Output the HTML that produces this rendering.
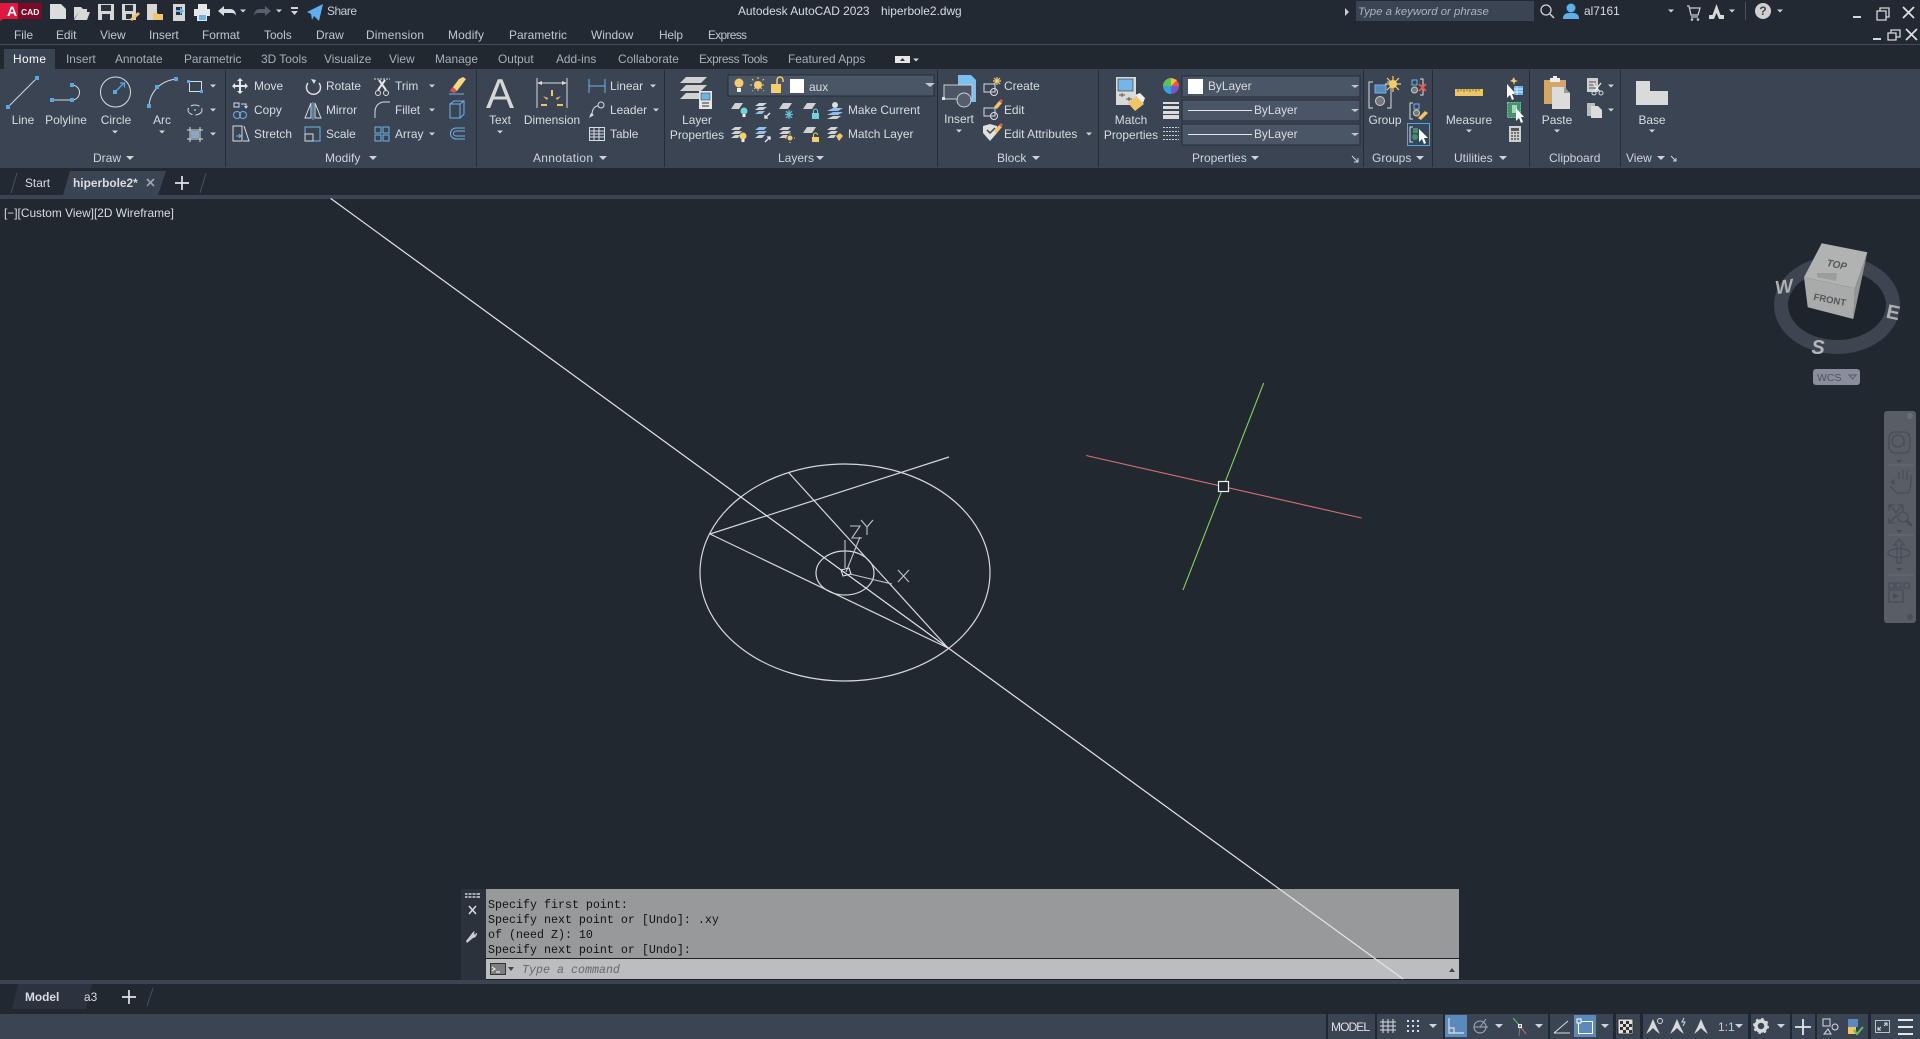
<!DOCTYPE html>
<html><head><meta charset="utf-8"><title>AutoCAD</title>
<style>
html,body{margin:0;padding:0;background:#212830;width:1920px;height:1039px;overflow:hidden}
svg{display:block;position:absolute;left:0;top:0}
text{font-family:"Liberation Sans",sans-serif;font-size:11.9px;fill:#d9dde2}
.m text{fill:#c3c8ce}
.tb text{fill:#aab0b8}
.c text{text-anchor:middle}
.p text{fill:#d0d4da;font-size:12px}
.cmd text{font-family:"Liberation Mono",monospace;font-size:11.67px;fill:#101214}
.s{fill:#5aa6e0}
.w{stroke:#d9dde2;fill:none}
.b{stroke:#6db3e8;fill:none}
.n{stroke:#474d57;fill:none;stroke-width:1.3}
</style></head><body>
<svg width="1920" height="1039" viewBox="0 0 1920 1039">
<defs><path id="c" d="M-3-1.5h6l-3 3z" fill="#d0d4da"/><path id="cb" d="M-4-2h8l-4 4z" fill="#d0d4da"/></defs>
<rect width="1920" height="1039" fill="#212830"/>
<rect y="0" width="1920" height="44" fill="#222933"/>
<rect y="44" width="1920" height="1" fill="#454c58"/>

<!-- logo and QAT -->
<path d="M0 3H18V19H3L0 21z" fill="#e0173f"/><rect x="18" y="3" width="24" height="16" fill="#7d0a2a"/>
<text x="7" y="16" style="font-weight:700;font-size:14px;fill:#fff">A</text>
<text x="21" y="15" style="font-size:8.500px;font-weight:700;fill:#eee">CAD</text>
<path d="M50 4h11l5 5v10H50z" fill="#dcdcdc"/>
<path d="M74 7h7l2 2h4v3H79l-5 7zM79 12h11l-3 8H74z" fill="#d8d8d8"/>
<path d="M98 4h16v16H98z" fill="#d6d6d6"/><rect x="101" y="5" width="10" height="6" fill="#2a303a"/><rect x="102" y="14" width="8" height="6" fill="#2a303a"/>
<path d="M122 4h14v16h-14z" fill="#d6d6d6"/><rect x="125" y="5" width="8" height="6" fill="#2a303a"/><rect x="126" y="14" width="6" height="5" fill="#2a303a"/><path d="M130 19l8-7 2 2-8 7z" fill="#f4c46a"/>
<path d="M147 4h10v16h-10z" fill="#d6d6d6"/><path d="M153 13h4l1 1h5v6h-10z" fill="#f4c46a"/>
<path d="M173 4h12v17h-12z" fill="#d6d6d6"/><path d="M176 7h6v8h-6z" fill="#2a303a"/><path d="M176 10h4v-3l4 4-4 4v-3h-4z" fill="#6db3e8"/>
<path d="M198 4h9v5h-9z" fill="#e6e6e6"/><path d="M194 9h16v7h-3v5h-10v-5h-3z" fill="#e6e6e6"/><rect x="199" y="15" width="7" height="5" fill="#6db3e8"/>
<path d="M218 11l6-5v3h6c4 0 6 3 6 7-1-3-3-3-6-3h-6v3z" fill="#d9dde2"/><use href="#c" x="243" y="11"/>
<path d="M271 11l-6-5v3h-5c-4 0-6 3-6 7 1-3 3-3 6-3h5v3z" fill="#59606b"/><use href="#c" x="279" y="11"/>
<path d="M291 7h7v2h-7zM291 11h7l-3.500 4z" fill="#d0d4da"/>
<path d="M307 12l16-8-4 17-5-5-2 4-1-6z" fill="#5fb0ea"/>
<text x="327" y="15" textLength="30" style="fill:#c7d0da">Share</text>
<text x="738" y="15">Autodesk AutoCAD 2023</text><text x="881" y="15">hiperbole2.dwg</text>
<path d="M1345 8l4 4-4 4z" fill="#c8ccd2"/>
<rect x="1356" y="1" width="178" height="20" fill="#3b4453"/>
<text x="1358" y="15" style="font-style:italic;font-size:11.400px;fill:#aeb4bc">Type a keyword or phrase</text>
<circle cx="1546" cy="10" r="5" fill="none" stroke="#cfd3d8" stroke-width="1.300"/><path d="M1550 14l4 4" stroke="#cfd3d8" stroke-width="1.500"/>
<circle cx="1571" cy="8" r="4.500" fill="#5fb0ea"/><path d="M1563 19c0-6 4-6 8-6s8 0 8 6z" fill="#5fb0ea"/>
<text x="1584" y="15">al7161</text><use href="#c" x="1671" y="11"/>
<path d="M1687 6h2l2 9h7l2-7h-10M1691 17h7" fill="none" stroke="#c8ccd2" stroke-width="1.300"/><circle cx="1692" cy="19.500" r="1.300" fill="#c8ccd2"/><circle cx="1698" cy="19.500" r="1.300" fill="#c8ccd2"/>
<path d="M1716.500 4l4 11h3.500v4h-5l-2.500-6-2.500 6h-5v-4h3.500z" fill="#d8d8d8"/><use href="#c" x="1732" y="11"/>
<rect x="1745" y="2" width="1" height="18" fill="#4a515c"/>
<circle cx="1763" cy="11" r="8" fill="#d0d0d0"/><text x="1763" y="15" text-anchor="middle" style="font-weight:700;fill:#444">?</text><use href="#c" x="1780" y="11"/>
<rect x="1853" y="16" width="8" height="2" fill="#d8d8d8"/>
<path d="M1877 11h9v9h-9zM1880 11v-3h9v9h-3" fill="none" stroke="#d8d8d8" stroke-width="1.300"/>
<path d="M1903 7l11 11m0-11l-11 11" stroke="#e0e0e0" stroke-width="1.700"/>
<rect x="1873" y="38" width="8" height="2" fill="#d8d8d8"/>
<path d="M1888 33h8v7h-8zM1891 33v-3h9v7h-4" fill="none" stroke="#d8d8d8" stroke-width="1.300"/>
<path d="M1906 29l11 11m0-11l-11 11" stroke="#e0e0e0" stroke-width="1.700"/>

<!-- menu -->
<g class="m">
<text x="14" y="39">File</text><text x="56" y="39">Edit</text><text x="100" y="39">View</text><text x="149" y="39">Insert</text><text x="202" y="39">Format</text><text x="264" y="39">Tools</text><text x="316" y="39">Draw</text><text x="366" y="39" textLength="58">Dimension</text><text x="448" y="39" textLength="36">Modify</text><text x="509" y="39" textLength="58">Parametric</text><text x="591" y="39">Window</text><text x="659" y="39" textLength="24">Help</text><text x="708" y="39" textLength="39">Express</text>
</g>

<!-- ribbon tabs -->
<rect x="4" y="49" width="51" height="20" fill="#3b4453"/>
<text x="13" y="63" textLength="33" style="fill:#fff">Home</text>
<g class="tb">
<text x="66" y="63">Insert</text><text x="115" y="63">Annotate</text><text x="184" y="63">Parametric</text><text x="261" y="63">3D Tools</text><text x="324" y="63">Visualize</text><text x="389" y="63">View</text><text x="435" y="63">Manage</text><text x="498" y="63">Output</text><text x="556" y="63">Add-ins</text><text x="618" y="63">Collaborate</text><text x="699" y="63" textLength="69">Express Tools</text><text x="788" y="63">Featured Apps</text>
</g>
<rect x="895" y="56" width="15" height="7" fill="#e6e6e6"/><path d="M900 61h5l-2.500-3z" fill="#333"/><use href="#c" x="916" y="60"/>

<!-- ribbon -->
<rect y="69" width="1920" height="99" fill="#3b4453"/>
<g fill="#252c36">
<rect x="225" y="70" width="1" height="97"/><rect x="476" y="70" width="1" height="97"/><rect x="664" y="70" width="1" height="97"/><rect x="937" y="70" width="1" height="97"/><rect x="1098" y="70" width="1" height="97"/><rect x="1363" y="70" width="1" height="97"/><rect x="1432" y="70" width="1" height="97"/><rect x="1529" y="70" width="1" height="97"/><rect x="1620" y="70" width="1" height="97"/>
</g>

<!-- Labels -->
<g class="c">
<text x="23" y="124">Line</text><text x="66" y="124">Polyline</text><text x="116" y="124">Circle</text><text x="162" y="124">Arc</text>
<text x="500" y="124">Text</text><text x="552" y="124">Dimension</text>
<text x="697" y="124">Layer</text><text x="697" y="139">Properties</text>
<text x="959" y="123">Insert</text>
<text x="1131" y="124">Match</text><text x="1131" y="139">Properties</text>
<text x="1385" y="124">Group</text><text x="1469" y="124">Measure</text><text x="1557" y="124">Paste</text><text x="1652" y="124">Base</text>
</g>
<text x="254" y="90">Move</text><text x="254" y="114">Copy</text><text x="254" y="138" textLength="38">Stretch</text>
<text x="326" y="90">Rotate</text><text x="326" y="114">Mirror</text><text x="326" y="138">Scale</text>
<text x="395" y="90">Trim</text><text x="395" y="114">Fillet</text><text x="395" y="138">Array</text>
<text x="610" y="90">Linear</text><text x="610" y="114">Leader</text><text x="610" y="138">Table</text>
<text x="848" y="114">Make Current</text><text x="848" y="138">Match Layer</text>
<text x="1004" y="90">Create</text><text x="1004" y="114">Edit</text><text x="1004" y="138">Edit Attributes</text>
<g class="p">
<text x="93" y="162">Draw</text><text x="325" y="162">Modify</text><text x="533" y="162" textLength="60">Annotation</text><text x="778" y="162">Layers</text><text x="997" y="162">Block</text><text x="1192" y="162">Properties</text><text x="1372" y="162">Groups</text><text x="1454" y="162">Utilities</text><text x="1549" y="162">Clipboard</text><text x="1626" y="162">View</text>
</g>
<use href="#cb" x="130" y="158"/><use href="#cb" x="373" y="158"/><use href="#cb" x="603" y="158"/><use href="#cb" x="820" y="158"/><use href="#cb" x="1036" y="158"/><use href="#cb" x="1255" y="158"/><use href="#cb" x="1420" y="158"/><use href="#cb" x="1503" y="158"/><use href="#cb" x="1661" y="158"/>
<path d="M1352 156l6 6m0-4v4h-4M1671 156l5 5m0-3v3h-3" stroke="#d0d4da" fill="none"/>
<use href="#c" x="115" y="132"/><use href="#c" x="162" y="132"/><use href="#c" x="500" y="132"/><use href="#c" x="959" y="131"/><use href="#c" x="1469" y="131"/><use href="#c" x="1557" y="131"/><use href="#c" x="1652" y="131"/>
<use href="#c" x="213" y="86"/><use href="#c" x="213" y="110"/><use href="#c" x="213" y="134"/>
<use href="#c" x="432" y="86"/><use href="#c" x="432" y="110"/><use href="#c" x="432" y="134"/>
<use href="#c" x="653" y="86"/><use href="#c" x="656" y="110"/><use href="#c" x="1089" y="134"/>
<use href="#c" x="1611" y="86"/><use href="#c" x="1611" y="110"/>

<!-- Draw icons -->
<path class="w" d="M8 107L37 78"/><rect class="s" x="6" y="105" width="4" height="4"/><rect class="s" x="35" y="76" width="4" height="4"/>
<path class="w" d="M52 100H72A7.500 7.500 0 0 0 72 85"/><rect class="s" x="50" y="98" width="4" height="4"/><rect class="s" x="70" y="98" width="4" height="4"/><rect class="s" x="70" y="83" width="4" height="4"/>
<circle class="w" cx="115.500" cy="92" r="15"/><rect class="s" x="113" y="90" width="4" height="4"/><path d="M116 91l8-8m-4 0h4.500v4.500" stroke="#5aa6e0" fill="none" stroke-width="1.300"/>
<path class="w" d="M149 106C150 92 160 81 176 79"/><rect class="s" x="147" y="104" width="4" height="4"/><rect class="s" x="155" y="85" width="4" height="4"/><rect class="s" x="174" y="77" width="4" height="4"/>
<rect class="w" x="189.500" y="81.500" width="12" height="10"/><rect class="s" x="187" y="80" width="3" height="3"/><rect class="s" x="200" y="90" width="3" height="3"/>
<ellipse class="w" cx="195" cy="110" rx="7" ry="5" stroke-dasharray="9 3"/><rect class="s" x="194" y="109" width="2" height="2"/>
<path class="w" d="M187 130h16M187 139h16M190 127v15M200 127v15"/><path d="M191 131h8v7h-8z" fill="#8aa7c4"/>

<!-- Modify icons -->
<path d="M240 78l3 3h-2v4h4v-2l3 3-3 3v-2h-4v4h2l-3 3-3-3h2v-4h-4v2l-3-3 3-3v2h4v-4h-2z" fill="#e4e6e9"/>
<rect class="w" x="234" y="103" width="5" height="4"/><path class="w" d="M241 104h5v3m-1.500-1l1.500 2 1.500-2"/><circle class="b" cx="237" cy="115" r="3.500"/><circle class="b" cx="243" cy="115" r="3.500"/>
<path class="w" d="M233 126h9v15h-9zM244 126l5 15h-6"/><path d="M236 136h5m-2-2l2 2-2 2" stroke="#6db3e8" fill="none"/>
<path class="w" stroke-width="1.500" d="M319 83a7 7 0 1 1-11 0"/><path d="M311 79l5 1-2 4z" fill="#d9dde2"/>
<path class="w" d="M311 103l-6 15h6zM315 103l6 15h-6z"/><path d="M313 102v18" stroke="#6db3e8"/>
<rect class="b" x="305" y="127" width="15" height="14"/><rect class="w" x="305" y="134" width="8" height="7"/>
<path class="w" d="M374 79h16" stroke-dasharray="2 1"/><path d="M379 80l7 10M385 80l-7 10" stroke="#e8e8e8" stroke-width="2"/><circle class="w" cx="378" cy="93" r="2.500"/><circle class="w" cx="386" cy="93" r="2.500"/>
<path class="w" d="M375 118v-6c0-6 4-10 9-10h6"/>
<g class="b"><rect x="375" y="127" width="6" height="6"/><rect x="383" y="127" width="6" height="6"/><rect x="375" y="135" width="6" height="6"/><rect x="383" y="135" width="6" height="6"/></g>
<path d="M450 91l9-12 4-2 3 2-9 12z" fill="#f4d77e"/><path d="M450 91l3-4 4 4-3 2z" fill="#e2504b"/><path d="M449 94h15" stroke="#6db3e8"/>
<path class="b" d="M450 104h10v14h-10zM450 104l4-3h10v13l-4 4M460 104l4-3"/>
<path class="b" d="M465 128h-9a5 5 0 0 0 0 11h9M465 131h-9a2 2 0 0 0 0 5h9"/>

<!-- Annotation icons -->
<text x="500" y="108" text-anchor="middle" style="font-size:42px;fill:#d6d6d6">A</text>
<path class="w" d="M537 78v30M567 78v30M539 83h26"/><path d="M537 83l5-2v4zM567 83l-5-2v4z" fill="#d9dde2"/>
<path d="M551 90h2v6h-2zM543 96l5 2-1 2zM561 96l-5 2 1 2zM541 104h6v2h-6zM557 104h6v2h-6z" fill="#f0c464"/>
<path class="b" d="M589 79v14M605 79v14M589 86h16"/>
<circle class="w" cx="601" cy="105" r="3"/><path class="w" d="M598 106c-4 0-6 4-6 9"/><path d="M589 118l5-3-3-2z" fill="#d9dde2"/>
<rect class="w" x="589.500" y="127.500" width="15" height="13"/><path class="w" d="M589 131h16M589 134h16M589 137h16M594 128v13M599 128v13"/>

<!-- Layers -->
<g fill="#d2d2d2"><path d="M686 77h21l-6 6h-21z"/><path d="M686 85h21l-6 6h-21z"/><path d="M686 93h21l-6 6h-21z"/></g>
<rect x="699" y="91" width="13" height="18" fill="#e6e6e6"/><rect x="701" y="93" width="9" height="7" fill="#6db3e8" stroke="#333" stroke-width=".5"/><path d="M702 103h7M702 106h7" stroke="#333"/>
<rect x="728" y="75" width="206" height="21" fill="#4a5566" stroke="#262d37"/>
<circle cx="739" cy="83" r="4.500" fill="#f7cc6f"/><rect x="737" y="88" width="4" height="4" fill="#eee"/>
<circle cx="758" cy="85" r="4" fill="#f7cc6f"/><path d="M758 77v16M750 85h16M752 79l12 12M764 79l-12 12" stroke="#f7cc6f" stroke-dasharray="2 2" fill="none"/>
<rect x="771" y="84" width="10" height="9" fill="#f7cc6f"/><path d="M777 84v-4a3 3 0 0 1 6 0v2" stroke="#f7cc6f" fill="none" stroke-width="1.500"/>
<rect x="790" y="79" width="14" height="14" fill="#fff"/>
<text x="809" y="91">aux</text>
<path d="M925 83h10l-5 4z" fill="#c3c8ce"/>
<g fill="#d2d2d2">
<path d="M735 103h8l-4 6h-8z"/>
<path d="M759 103h8l-4 3h-8z" fill="#c8d8e8"/><path d="M759 107h8l-4 3h-8z"/><path d="M759 111h6l-3 3h-7z" fill="#8fc0ea"/>
<path d="M783 103h9l-4 6h-9z"/>
<path d="M807 103h9l-4 6h-9z"/>
<path d="M833 108h10l-5 3h-11z" fill="#8fc0ea"/><path d="M833 112h10l-5 3h-11z" fill="#8fc0ea"/><path d="M833 116h8l-4 3h-10z"/>
<path d="M735 127h7l-3 3h-8zM735 131h7l-3 3h-8zM735 135h5l-2 3h-7z"/>
<path d="M759 127h8l-3 3h-9z" fill="#8fc0ea"/><path d="M759 131h8l-3 3h-9z" fill="#8fc0ea"/><path d="M759 135h6l-3 3h-7z"/>
<path d="M783 127h8l-3 3h-9zM783 131h8l-3 3h-9zM783 135h5l-2 3h-7z"/>
<path d="M807 127h9l-4 6h-9z"/>
<path d="M831 127h7l-3 3h-8zM831 131h7l-3 3h-8zM831 135h5l-2 3h-7z"/>
</g>
<circle cx="744" cy="111" r="3.500" fill="#6fd1db"/><rect x="742.500" y="114" width="3" height="3" fill="#eee"/>
<path d="M770 113l-5 5m0-3v3h3" stroke="#eee" fill="none" stroke-width="1.300"/>
<path d="M789 110v9M785 114.500h8M786 111l6 7M792 111l-6 7" stroke="#5ec4cf" stroke-width="1.300"/>
<rect x="812" y="113" width="7" height="6" fill="#6fd1db"/><path d="M813.500 113v-2a2 2 0 0 1 4 0v2" stroke="#6fd1db" fill="none"/>
<circle cx="835" cy="105" r="3" fill="#ddd"/>
<circle cx="743" cy="136" r="3.500" fill="#f7cc6f"/><rect x="741.500" y="139" width="3" height="3" fill="#eee"/>
<path d="M765 142l5-5m-3 0h3v3" stroke="#eee" fill="none" stroke-width="1.300"/>
<circle cx="790" cy="138" r="2.500" fill="#f7cc6f"/><path d="M790 133v10M785 138h10" stroke="#f7cc6f" stroke-dasharray="1.500 1.500"/>
<rect x="812" y="137" width="7" height="5" fill="#f7cc6f"/><path d="M813.500 137v-2a2 2 0 0 1 4 0" stroke="#f7cc6f" fill="none"/>
<path d="M836 136l4-3 3 3-4 5z" fill="#f4c46a"/>

<!-- Block -->
<path d="M958 75h13l5 5v22h-18z" fill="#7cc0f0"/>
<rect x="944" y="85" width="28" height="14" fill="#4c5563" stroke="#cdd1d6"/><circle cx="964" cy="100" r="7" fill="#555e6b" stroke="#cdd1d6"/><rect x="942" y="97" width="3" height="3" fill="#e0e0e0"/>
<g class="w"><rect x="984" y="84" width="11" height="8"/><circle cx="994" cy="92" r="3.500"/><rect x="984" y="108" width="11" height="8"/><circle cx="994" cy="116" r="3.500"/></g>
<path d="M997 77v8M993 81h8M994 78l6 6M1000 78l-6 6" stroke="#f7cc6f" stroke-width="1.200"/>
<path d="M994 107l5-6 3 2-5 6z" fill="#f4c46a"/><path d="M999 101l2-2 2 2-2 2z" fill="#e25a50"/>
<path d="M983 126l7-2 7 2v7l-7 8-7-8z" fill="#e0e0e0"/><path d="M987 130l3 3 5-5" stroke="#3b4453" fill="none" stroke-width="1.500"/><path d="M994 131l5-6 3 2-5 6z" fill="#f4c46a"/><path d="M999 125l2-2 2 2-2 2z" fill="#e25a50"/>

<!-- Properties -->
<rect x="1116" y="77" width="20" height="28" fill="#d9d9d9"/><rect x="1118" y="79" width="15" height="12" fill="#74b6ea" stroke="#333" stroke-width=".6"/><path d="M1119 95h6m-3-2v4M1126 99h6m-3-2v4" stroke="#555"/>
<path d="M1128 103l9-7 7 8-9 7z" fill="#efc566"/><path d="M1135 95l5-2 5 5-2 5z" fill="#eee"/>
<path d="M1171 78a8 8 0 0 1 8 8h-8z" fill="#ef5350"/><path d="M1179 86a8 8 0 0 1-8 8v-8z" fill="#7e57c2"/><path d="M1171 94a8 8 0 0 1-8-8h8z" fill="#3e9ddb"/><path d="M1163 86a8 8 0 0 1 8-8v8z" fill="#5dc05b"/><path d="M1171 78l6 2-6 6z" fill="#f4c430"/>
<rect x="1182" y="76" width="178" height="21" fill="#4a5566" stroke="#262d37"/><rect x="1182" y="100" width="178" height="21" fill="#4a5566" stroke="#262d37"/><rect x="1182" y="124" width="178" height="21" fill="#4a5566" stroke="#262d37"/>
<rect x="1188" y="79" width="15" height="15" fill="#fff"/>
<text x="1208" y="90">ByLayer</text><text x="1254" y="114">ByLayer</text><text x="1254" y="138">ByLayer</text>
<path d="M1188 110.500h64M1188 134.500h64" stroke="#e8e8e8"/>
<path d="M1351 85h8l-4 3zM1351 109h8l-4 3zM1351 133h8l-4 3z" fill="#c3c8ce"/>
<g fill="#dcdcdc"><rect x="1163" y="102" width="16" height="2"/><rect x="1163" y="106" width="16" height="3"/><rect x="1163" y="111" width="16" height="3"/><rect x="1163" y="115" width="16" height="4"/></g>
<path d="M1163 127.500h16M1163 131.500h16M1163 135.500h16M1163 139.500h16" stroke="#cfcfcf" stroke-dasharray="2 1"/>

<!-- Groups -->
<path class="w" d="M1373 82h-4v26h4M1387 82h4v26h-4"/><rect x="1375" y="85" width="11" height="8" fill="#5a88b8" stroke="#6db3e8"/><circle cx="1380" cy="101" r="4.500" fill="#777" stroke="#ccc"/>
<circle cx="1393" cy="84" r="4" fill="#f7cc6f"/><path d="M1393 76v16M1385 84h16M1387 78l12 12M1399 78l-12 12" stroke="#f7cc6f" stroke-width="1.200"/>
<rect x="1412" y="80" width="5" height="5" fill="none" stroke="#6db3e8"/><circle cx="1414.500" cy="90" r="3" fill="#777" stroke="#ccc"/><path d="M1420 79h3v16h-3" stroke="#ddd" fill="none"/><path d="M1419 84l7 7m0-7l-7 7" stroke="#ef5350" stroke-width="1.800"/>
<path class="w" d="M1413 103h-3v16h3"/><rect x="1414" y="104" width="5" height="5" fill="none" stroke="#6db3e8"/><circle cx="1416.500" cy="113" r="3" fill="#777" stroke="#ccc"/><path d="M1418 118l7-7 3 2-7 7z" fill="#f4c46a"/>
<rect x="1407.500" y="123.500" width="22" height="22" fill="#33485f" stroke="#5ba3dd"/>
<path class="w" d="M1413 127h-3v15h3"/><rect x="1413" y="128" width="5" height="5" fill="#4c8a6c"/><circle cx="1415" cy="137" r="3" fill="#4c8a6c"/><path d="M1419 129v13l3-3 2 5 2-1-2-5h4z" fill="#fff"/>

<!-- Utilities -->
<rect x="1455" y="89" width="28" height="7" fill="#efc566"/><path d="M1458 89v3M1461 89v2M1464 89v3M1467 89v2M1470 89v3M1473 89v2M1476 89v3M1479 89v2" stroke="#7d6a3a"/>
<path d="M1507 84v14l3-3 2 5 2-1-2-5h4z" fill="#fff"/><rect x="1514" y="86" width="9" height="9" fill="#6db3e8"/><path d="M1514 89h9M1514 92h9M1517 86v9" stroke="#fff" stroke-width=".7"/><path d="M1512 80l2-3 1 3 3 1-3 1-1 3-1-3-3-1z" fill="#f7cc6f"/>
<rect x="1507.500" y="102.500" width="13" height="15" fill="#4a9070" stroke="#66d096" stroke-dasharray="2 1"/><path d="M1512 105h5v8h-5z" fill="#9fdcb8"/><path d="M1516 108v13l3-3 2 5 2-1-2-5h3z" fill="#fff"/>
<rect x="1509" y="126" width="12" height="16" fill="#cfcfcf"/><rect x="1511" y="128" width="8" height="3" fill="#555"/><path d="M1511 133h8M1511 136h8M1511 139h8" stroke="#555" stroke-dasharray="2 1" stroke-width="1.500"/>

<!-- Clipboard -->
<rect x="1544" y="80" width="22" height="24" fill="#d2a866"/><rect x="1550" y="78" width="10" height="4" fill="#eee"/><rect x="1553" y="76" width="4" height="3" fill="#eee"/>
<path d="M1552 87h12l6 6v16h-18z" fill="#dcdcdc"/><path d="M1564 87l6 6h-6z" fill="#999"/>
<rect x="1587" y="78" width="11" height="14" fill="#cfcfcf"/><path d="M1589 82h7M1589 85h7M1589 88h7" stroke="#555"/><path d="M1593 83l7 9M1601 83l-7 9" stroke="#eee" stroke-width="1.300"/><circle class="w" cx="1594" cy="93" r="2"/><circle class="w" cx="1601" cy="93" r="2"/>
<path d="M1587 103h8v13h-8z" fill="#bbb"/><path d="M1591 106h7l4 4v8h-11z" fill="#dcdcdc"/>
<path d="M1636 81h14v10h18v14h-32z" fill="#dadada"/>

<!-- file tabs row -->
<rect y="168" width="1920" height="27" fill="#222933"/>
<rect y="195" width="1920" height="4" fill="#3b4453"/>
<path d="M63 195L70 171H166L158 195z" fill="#3b4453"/>
<path d="M11 193L17 173" stroke="#4a525e"/><path d="M200 193L206 173" stroke="#4a525e"/>
<text x="25" y="187">Start</text>
<text x="73" y="187" style="font-weight:700">hiperbole2*</text>
<path d="M147 179l7 7m0-7l-7 7" stroke="#9fa5ad" stroke-width="1.600"/>
<path d="M182 176v14M175 183h14" stroke="#e2e4e7" stroke-width="1.700"/>
<text x="4" y="217">[−][Custom View][2D Wireframe]</text>

<!-- drawing -->
<g fill="none" stroke="#d6d8da" stroke-width="1.200">
<ellipse cx="845" cy="572.500" rx="145" ry="108.500"/>
<ellipse cx="845" cy="573" rx="29" ry="22"/>
<path d="M710 534L949 457M710 534L948 648M789 473L948 648"/>
</g>
<g fill="none" stroke="#c2c5c9" stroke-width="1.100">
<path d="M845 540V568M846 572L860 537M850 574L892 584"/>
<path d="M850 526h10l-8 12h10M861 520l6 7 6-7M867 527v8M898 570l11 12m0-12l-11 12"/>
<path d="M841 570l8-2 2 6-8 2z" stroke="#e6e6e6"/>
</g>
<path d="M1086 455.500L1361.600 518" stroke="#d9706f" stroke-width="1.100"/>
<path d="M1263.700 383L1183 590" stroke="#7ed35c" stroke-width="1.100"/>
<rect x="1218.500" y="481.500" width="10" height="10" fill="#222933" stroke="#f0f0f0" stroke-width="1.200"/>

<!-- viewcube -->
<ellipse cx="1837" cy="305" rx="56" ry="42" fill="#1e242c" stroke="#3d4550" stroke-width="14"/>
<path d="M1821.700 243.300L1867.300 252.300L1855 288.300L1804 277.300z" fill="#b1b2b2"/>
<path d="M1804 277.300L1855 288.300L1853.300 319L1807.700 307.300z" fill="#a9aaaa"/>
<path d="M1867.300 252.300L1855 288.300L1853.300 319z" fill="#939596"/>
<path d="M1817 273h20l-1 8-19-4z" fill="#9a9c9d"/>
<text x="1837" y="268" text-anchor="middle" transform="rotate(11 1837 264)" style="font-size:10px;font-weight:700;font-style:italic;fill:#55585c">TOP</text>
<text x="1830" y="303" text-anchor="middle" transform="rotate(11 1830 299)" style="font-size:9.500px;font-weight:700;fill:#55585c">FRONT</text>
<text x="1784" y="293" text-anchor="middle" transform="rotate(-8 1784 287)" style="font-size:19px;font-weight:700;font-style:italic;fill:#aeb0b2">W</text>
<text x="1893" y="319" text-anchor="middle" transform="rotate(12 1893 313)" style="font-size:20px;font-weight:700;fill:#aeb0b2">E</text>
<text x="1818" y="354" text-anchor="middle" style="font-size:20px;font-weight:700;font-style:italic;fill:#b5b7b9">S</text>
<rect x="1813" y="369" width="47" height="16" rx="3" fill="#8a8e9c"/>
<text x="1817" y="381" style="font-size:10.500px;fill:#4e5462">WCS</text><path d="M1849 375h7l-3.500 4z" fill="none" stroke="#555c69"/>

<!-- nav bar -->
<rect x="1884" y="411" width="32" height="212" rx="3" fill="#595e65"/>
<circle cx="1910" cy="416" r="3" fill="#6a6f76"/><circle cx="1910" cy="617" r="3" fill="#4b5058"/>
<g class="n">
<rect x="1889" y="432" width="21" height="21" rx="6"/><circle cx="1898" cy="441" r="6"/><path d="M1904 441v5"/>
<path d="M1888 465h26M1888 535h26M1888 575h26" stroke="#656a71"/>
<path d="M1890 486c3 2 4 5 7 7h11c3-4 3-9 3-12v-6m-4 5v-9m-4 8v-9m-4 9v-7m-5 8v4l-3-2z"/>
<path d="M1889 505l8 8m-8-8v6m0-6h6M1903 505l-8 8m8-8v6m0-6h-6M1889 523l8-8m-8 8v-5m0 5h6"/><circle cx="1903" cy="517" r="5"/><path d="M1907 521l5 5" stroke-width="2.500"/>
<path d="M1899 539l5 6h-3v18h-4v-18h-3z"/><ellipse cx="1899" cy="553" rx="11" ry="4.500"/>
<path d="M1889 583h5v5h-5zM1896 583h5v5h-5zM1904 583h5v5h-5zM1889 590h14v12h-14z"/>
</g>
<path d="M1893 593v6l6-3z" fill="#474d57"/>
<path d="M1896 460h6l-3 3zM1896 530h6l-3 3zM1896 568h6l-3 3z" fill="#454b54"/>

<!-- bottom rows -->
<rect y="980" width="1920" height="4" fill="#3b4453"/>
<rect y="1014" width="1920" height="25" fill="#3b4453"/>
<path d="M12 1009L18 984H92L86 1009z" fill="#2c333e"/>
<text x="25" y="1001" style="font-weight:700">Model</text><text x="84" y="1001">a3</text>
<path d="M129 990v14M122 997h14" stroke="#e2e4e7" stroke-width="1.700"/><path d="M147 1006L153 988" stroke="#4a525e"/>

<!-- command window -->
<rect x="461" y="889" width="25" height="91" fill="#2b323c"/>
<path d="M465 893h15v5h-15z" fill="#c6c9cd" opacity=".8"/><path d="M465 895.500h15M468 893v5M472 893v5M476 893v5" stroke="#2b323c"/>
<path d="M469 906l7 8m0-8l-7 8" stroke="#d9dde2" stroke-width="1.500"/>
<path d="M466 941l7-9 2-1-1 2 1 2 1-2 1 0c0 3-2 5-4 5l-6 5z" fill="#c8ccd0"/>
<rect x="486" y="889" width="973" height="69" fill="#98999b"/>
<rect x="486" y="958" width="973" height="1" fill="#1d2127"/>
<rect x="486" y="959" width="973" height="20" fill="#bcbdbf"/>
<rect x="486" y="979" width="973" height="1" fill="#1d2127"/>
<g class="cmd">
<text x="488" y="908">Specify first point:</text>
<text x="488" y="923">Specify next point or [Undo]: .xy</text>
<text x="488" y="938">of (need Z): 10</text>
<text x="488" y="953">Specify next point or [Undo]:</text>
<text x="522" y="973" style="font-style:italic;fill:#66686b">Type a command</text>
</g>
<rect x="490.500" y="963.500" width="15" height="11" fill="#7d7e80" stroke="#333"/><path d="M492 967l3 2-3 2M496 972h4" stroke="#fff" fill="none"/>
<path d="M508 967h6l-3 4z" fill="#444"/><path d="M1449 972h6l-3-4z" fill="#444"/>

<path d="M330.600 198.400L1403 979" stroke="#e4e5e6" stroke-width="1.200" fill="none"/>

<!-- status bar -->
<g fill="#212830">
<rect x="1326" y="1014" width="2" height="25"/><rect x="1375" y="1014" width="2" height="25"/><rect x="1443" y="1014" width="2" height="25"/><rect x="1548" y="1014" width="2" height="25"/><rect x="1613" y="1014" width="3" height="25"/><rect x="1640" y="1014" width="3" height="25"/><rect x="1748" y="1014" width="3" height="25"/><rect x="1790" y="1014" width="2" height="25"/><rect x="1815" y="1014" width="2" height="25"/><rect x="1868" y="1014" width="3" height="25"/>
</g>
<rect x="1445" y="1015" width="22" height="22" fill="#5b88bd"/><rect x="1574" y="1015" width="22" height="22" fill="#5b88bd"/>
<text x="1331" y="1031" textLength="39" style="font-size:12px;fill:#e0e3e7">MODEL</text>
<path class="w" d="M1383 1019v14M1388 1019v14M1393 1019v14M1380 1022h16M1380 1026h16M1380 1030h16"/>
<path d="M1407 1021h12M1407 1026h12M1407 1031h12" stroke="#d9dde2" stroke-width="2" stroke-dasharray="2 3"/>
<use href="#cb" x="1433" y="1026"/>
<path class="w" stroke-width="1.200" d="M1449 1018v15h15M1449 1028h5v5"/>
<circle cx="1480" cy="1027" r="6" fill="none" stroke="#a7adb5"/><path d="M1474 1027h14M1480 1027l6-8" stroke="#a7adb5" fill="none"/><use href="#cb" x="1499" y="1026"/>
<path d="M1513 1018l7 8" stroke="#5dc05b"/><path d="M1520 1026l6 8" stroke="#d9706f"/><path d="M1520 1026l-1 10" stroke="#d9dde2" opacity=".4"/><rect x="1518.500" y="1024.500" width="3" height="3" fill="none" stroke="#eee"/><use href="#cb" x="1539" y="1026"/>
<path d="M1554 1033l14-12M1554 1033h16" stroke="#d9dde2" fill="none"/>
<rect x="1578.500" y="1021.500" width="14" height="12" fill="none" stroke="#fff"/><rect x="1577" y="1019" width="4" height="4" fill="#5b88bd" stroke="#fff"/><use href="#cb" x="1605" y="1026"/>
<rect x="1618" y="1019" width="15" height="15" fill="#e0e0e0" stroke="#333"/><path d="M1620 1021h3v3h-3zM1626 1021h3v3h-3zM1623 1024h3v3h-3zM1629 1024h3v3h-3zM1620 1027h3v3h-3zM1626 1027h3v3h-3zM1623 1030h3v3h-3zM1629 1030h3v3h-3z" fill="#333"/>
<g fill="#d6d8db"><path d="M1653 1019l3 7 4 8-4-3-3-3-3 3-4 3 4-8z"/><path d="M1677 1019l3 7 4 8-4-3-3-3-3 3-4 3 4-8z"/><path d="M1701 1019l3 7 4 8-4-3-3-3-3 3-4 3 4-8z"/></g>
<circle cx="1660" cy="1021" r="2.500" fill="#3b4453" stroke="#d6d8db"/><path d="M1684 1018l-2 4h3l-2 4" stroke="#d6d8db" fill="none"/>
<text x="1718" y="1031" style="font-size:12px;fill:#c9ccd1">1:1</text><use href="#cb" x="1739" y="1026"/>
<circle cx="1761" cy="1026" r="5" fill="none" stroke="#d6d8db" stroke-width="3.500"/><circle cx="1761" cy="1026" r="7" fill="none" stroke="#d6d8db" stroke-width="2" stroke-dasharray="2.500 3"/><use href="#cb" x="1781" y="1026"/>
<path d="M1803 1019v16M1795 1027h16" stroke="#e4e6e9" stroke-width="1.800"/>
<rect x="1823" y="1019" width="7" height="7" fill="none" stroke="#d9dde2"/><circle cx="1835" cy="1027" r="3" fill="none" stroke="#d9dde2"/><path d="M1828 1029l3 5h-7z" fill="none" stroke="#d9dde2"/>
<rect x="1848" y="1019" width="10" height="8" fill="#5b88bd"/><rect x="1848" y="1027" width="8" height="7" fill="#f0c464"/><path d="M1854 1030l3 4 6-7" stroke="#5dc05b" fill="none" stroke-width="2"/>
<rect x="1875.500" y="1020.500" width="14" height="12" fill="none" stroke="#b9bec5"/><path d="M1878 1030l3-3m-3 0v3h3M1887 1023l-3 3m3 0v-3h-3" stroke="#d9dde2" fill="none"/>
<path d="M1898 1020h15M1898 1027h15M1898 1034h15" stroke="#e4e6e9" stroke-width="2"/>
</svg>
</body></html>
